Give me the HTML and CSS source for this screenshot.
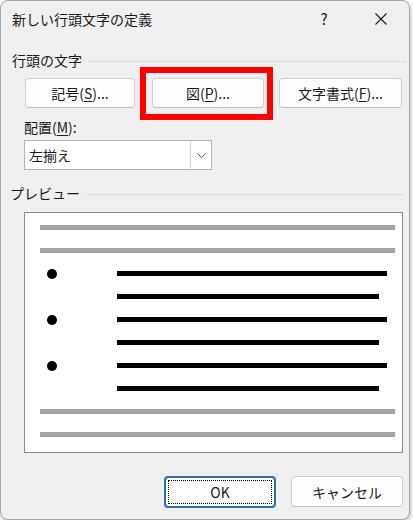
FILE: index.html
```html
<!DOCTYPE html>
<html lang="ja">
<head>
  <meta charset="UTF-8">
  <title>新しい行頭文字の定義</title>
  <link rel="stylesheet" href="styles.css">
</head>
<body>
  <div class="dialog">
    <div class="titlebar">
      <span class="title">新しい行頭文字の定義</span>
      <span class="help">?</span>
      <span class="close">
        <svg width="12" height="12" viewBox="0 0 12 12">
          <path d="M0.5 0.5 L11.5 11.5 M11.5 0.5 L0.5 11.5" stroke="#1a1a1a" stroke-width="1.1" fill="none"/>
        </svg>
      </span>
    </div>

    <div class="group-label"><span>行頭の文字</span></div>
    <div class="btn-row">
      <button class="btn btn-symbol">記号(<u>S</u>)...</button>
      <div class="highlight">
        <button class="btn btn-picture">図(<u>P</u>)...</button>
      </div>
      <button class="btn btn-font">文字書式(<u>F</u>)...</button>
    </div>

    <div class="field-label">配置(<u>M</u>):</div>
    <div class="select">
      <span class="select-value">左揃え</span>
      <span class="select-arrow">
        <svg width="9" height="5" viewBox="0 0 9 5">
          <path d="M0.5 0.5 L4.5 4.5 L8.5 0.5" stroke="#555" stroke-width="1" fill="none"/>
        </svg>
      </span>
    </div>

    <div class="group-label preview-label"><span>プレビュー</span></div>
    <div class="preview">
      <div class="line gray"></div>
      <div class="line gray"></div>
      <div class="item"><span class="bullet"></span><span class="line black long"></span></div>
      <div class="item"><span class="line black short"></span></div>
      <div class="item"><span class="bullet"></span><span class="line black long"></span></div>
      <div class="item"><span class="line black short"></span></div>
      <div class="item"><span class="bullet"></span><span class="line black long"></span></div>
      <div class="item"><span class="line black short"></span></div>
      <div class="line gray"></div>
      <div class="line gray"></div>
    </div>

    <div class="footer">
      <button class="btn btn-ok">OK</button>
      <button class="btn btn-cancel">キャンセル</button>
    </div>
  </div>
</body>
</html>
```

FILE: styles.css
```css
* {
  margin: 0;
  padding: 0;
  box-sizing: border-box;
}

body {
  background: #ffffff;
  font-family: "Noto Sans CJK JP", "Noto Sans", sans-serif;
  font-size: 14px;
  color: #1a1a1a;
}

u {
  text-decoration-thickness: 1px;
  text-underline-offset: 2px;
}

.dialog {
  width: 410px;
  height: 520px;
  background: #f0f0f0;
  border: 1px solid #a8a8a8;
  border-radius: 8px;
  box-shadow: 1px 2px 4px rgba(0, 0, 0, .25);
  display: flex;
  flex-direction: column;
}

.titlebar {
  height: 36px;
  display: flex;
  align-items: center;
  padding-left: 11px;
}

.title {
  flex: 1;
  line-height: 20px;
}

.help {
  width: 20px;
  text-align: center;
  font-size: 15px;
  line-height: 20px;
  margin-right: 41px;
}

.close {
  width: 12px;
  height: 12px;
  display: flex;
  margin-right: 22px;
}

.group-label {
  display: flex;
  align-items: center;
  gap: 6px;
  margin-top: 13px;
  padding-left: 11px;
  padding-right: 3px;
  line-height: 20px;
}

.group-label::after {
  content: "";
  flex: 1;
  height: 1px;
  margin-top: 3px;
  background: #dcdcdc;
}

.btn-row {
  display: flex;
  margin-top: 8px;
  padding-left: 24px;
}

.btn {
  font-family: inherit;
  font-size: 14px;
  color: #1a1a1a;
  height: 30px;
  background: #fdfdfd;
  border: 1px solid #d0d0d0;
  border-bottom-color: #c0c0c0;
  border-radius: 4px;
}

.btn-symbol {
  width: 110px;
}

.highlight {
  position: relative;
  margin-left: 17px;
}

.highlight::after {
  content: "";
  position: absolute;
  top: -11px;
  left: -12px;
  right: -9px;
  bottom: -12px;
  border: 6px solid #ff0000;
}

.btn-picture {
  width: 112px;
}

.btn-font {
  width: 123px;
  margin-left: 15px;
}

.field-label {
  margin-top: 9px;
  padding-left: 23px;
  line-height: 20px;
}

.select {
  display: flex;
  width: 188px;
  height: 30px;
  margin-top: 3px;
  margin-left: 23px;
  background: #ffffff;
  border: 1px solid #b4b4b4;
}

.select-value {
  flex: 1;
  padding-left: 4px;
  line-height: 28px;
}

.select-arrow {
  width: 21px;
  border-left: 1px solid #d4d4d4;
  display: flex;
  align-items: center;
  justify-content: center;
}

.preview-label {
  padding-left: 9px;
  padding-right: 5px;
}

.preview {
  width: 379px;
  height: 241px;
  margin-top: 9px;
  margin-left: 23px;
  background: #ffffff;
  border: 1px solid #8a8a8a;
  padding: 12px 7px 0 15px;
  display: flex;
  flex-direction: column;
  gap: 18px;
}

.line {
  display: block;
  height: 5px;
}

.gray {
  background: #a3a3a3;
}

.item {
  height: 5px;
  display: flex;
  align-items: center;
  padding-left: 77px;
  position: relative;
}

.bullet {
  position: absolute;
  left: 7px;
  top: -2px;
  width: 10px;
  height: 10px;
  border-radius: 50%;
  background: #000000;
}

.black {
  background: #000000;
}

.long {
  width: 270px;
}

.short {
  width: 262px;
}

.footer {
  display: flex;
  justify-content: flex-end;
  gap: 15px;
  margin-top: 23px;
  padding-right: 6px;
}

.btn-ok {
  width: 112px;
  height: 32px;
  border: 2px solid #2f6fb0;
  position: relative;
}

.btn-ok::after {
  content: "";
  position: absolute;
  inset: 2px;
  border: 1px dotted #000000;
}

.btn-cancel {
  width: 112px;
  height: 31px;
}
```
